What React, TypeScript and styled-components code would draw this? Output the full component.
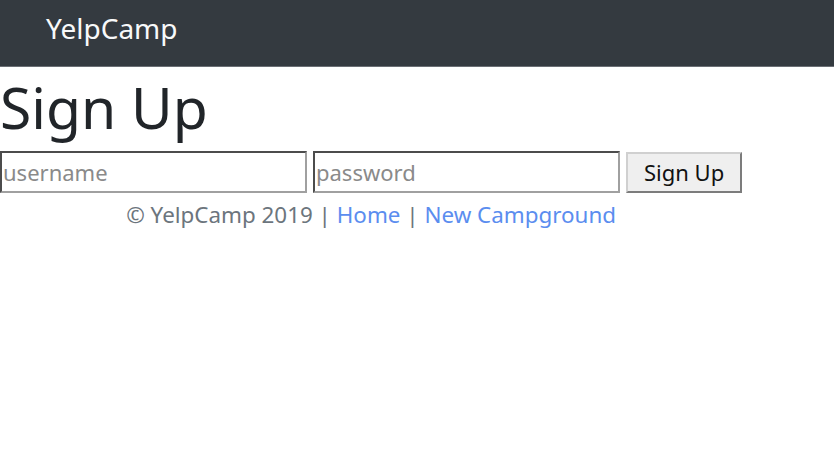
import React from "react"
import styled, { createGlobalStyle } from "styled-components"

const GlobalStyle = createGlobalStyle`
  body {
    margin: 0;
    background: #fff;
    font-family: "Noto Sans", "Open Sans", sans-serif;
    color: #212529;
  }
`

const Navbar = styled.nav`
  height: 67px;
  background: #343a40;
  border-bottom: 1px solid #6b6f75;
  display: flex;
  align-items: center;
  padding-left: 46px;
  box-sizing: border-box;
`

const Brand = styled.a`
  color: #f8f9fa;
  font-size: 28px;
  text-decoration: none;
  margin-top: -10px;
`

const Main = styled.div`
  display: inline-flex;
  flex-direction: column;
`

const Heading = styled.h1`
  font-size: 57px;
  font-weight: 400;
  margin: 6px 0 10px;
  line-height: 1.2;
`

const Form = styled.form`
  display: flex;
  gap: 6px;
  align-items: center;
`

const Input = styled.input`
  width: 307px;
  height: 42px;
  box-sizing: border-box;
  border: 2px inset #a0a0a0;
  font-family: inherit;
  font-size: 22px;
  padding: 0 1px;
  &::placeholder {
    color: #8a8a8a;
  }
`

const Button = styled.button`
  height: 41px;
  padding: 0 16px;
  font-family: inherit;
  font-size: 22px;
  color: #111;
  background: #efefef;
  border: 2px outset #d0d0d0;
`

const Footer = styled.p`
  margin: 6px 0 0;
  text-align: center;
  font-size: 22.4px;
  color: #6c757d;
`

const FooterLink = styled.a`
  color: #5b8def;
  text-decoration: none;
`

const App = () => {
  return (
    <>
      <GlobalStyle />
      <Navbar>
        <Brand href="#">YelpCamp</Brand>
      </Navbar>
      <Main>
        <Heading>Sign Up</Heading>
        <Form onSubmit={e => e.preventDefault()}>
          <Input type="text" placeholder="username" />
          <Input type="password" placeholder="password" />
          <Button>Sign Up</Button>
        </Form>
        <Footer>
          © YelpCamp 2019 | <FooterLink href="#">Home</FooterLink> |{" "}
          <FooterLink href="#">New Campground</FooterLink>
        </Footer>
      </Main>
    </>
  )
}

export default App
